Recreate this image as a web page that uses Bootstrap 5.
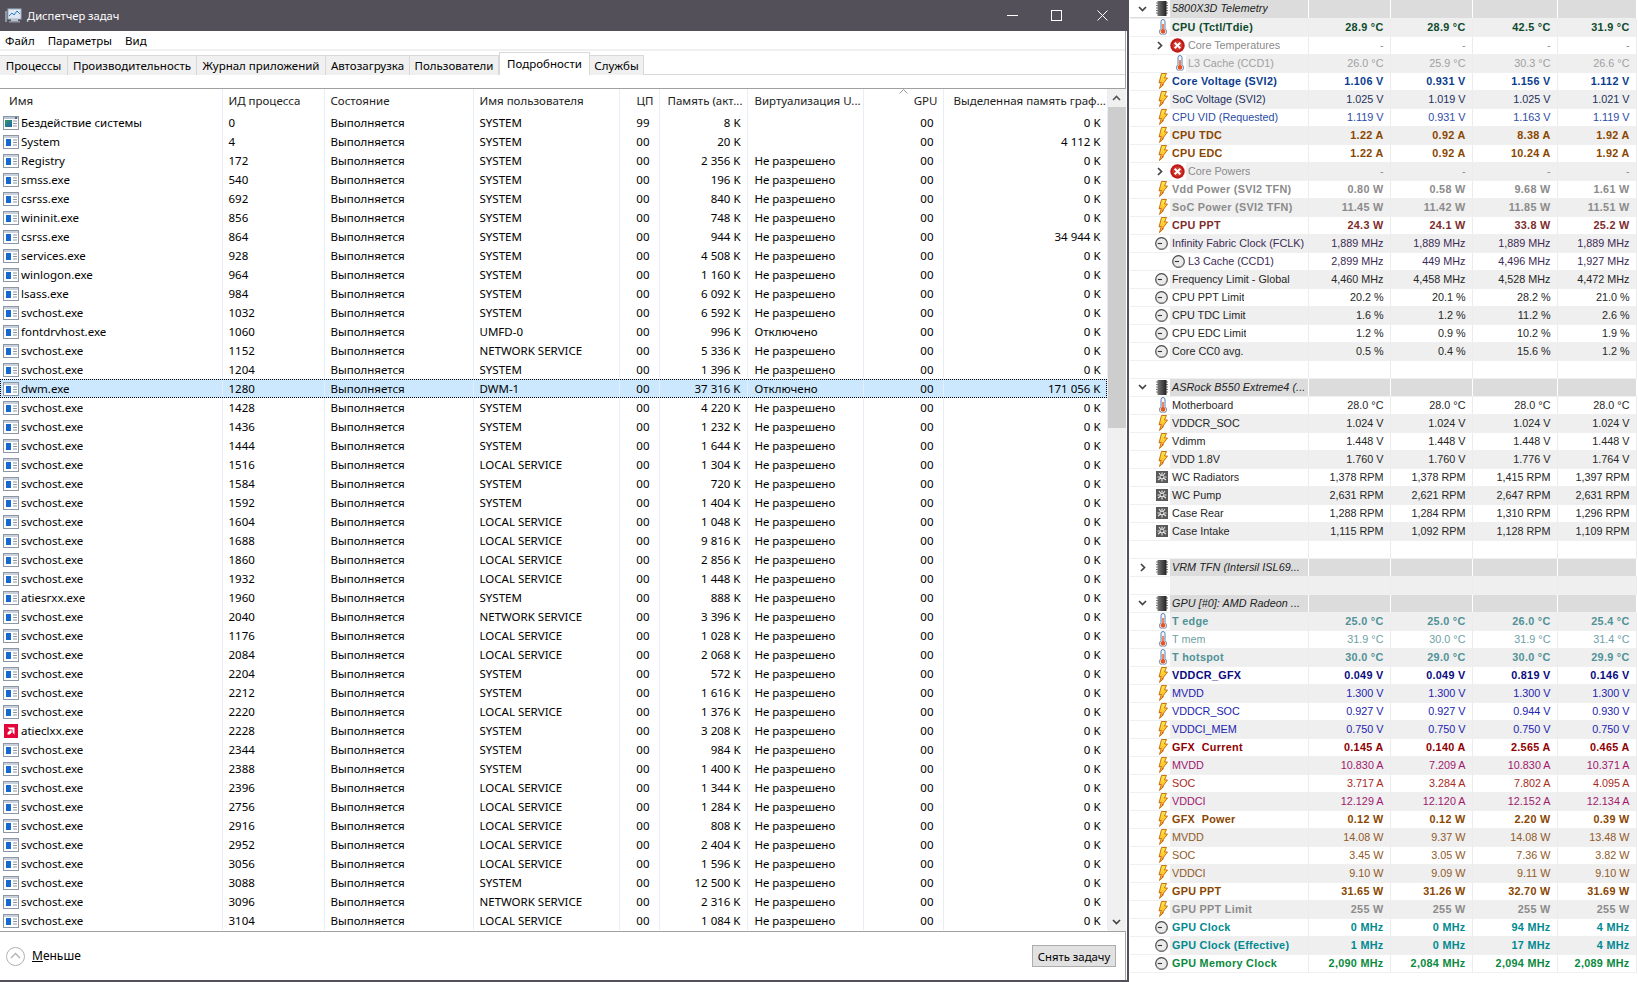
<!DOCTYPE html>
<html lang="ru">
<head>
<meta charset="utf-8">
<title>Диспетчер задач</title>
<link href="https://cdn.jsdelivr.net/npm/bootstrap@5.3.0/dist/css/bootstrap.min.css" rel="stylesheet">
<style>
html,body{height:982px;overflow:hidden;background:#fff}
body{font-family:"Noto Sans","Liberation Sans",sans-serif;font-size:11.5px;color:#000}
.tm-win{width:1129px;height:982px;border-right:2px solid #54505a;border-bottom:2px solid #54505a;flex:none}
.tm-title{height:31px;background:#54505a;color:#fff;padding-left:5px;gap:5px;font-size:11.2px}
.tm-title>span{padding-top:2px}
.tm-ctl{margin-left:auto;gap:33px;padding-right:19px}
.tm-closeico{margin-left:2px}
.tm-main{flex:1;min-height:0;border-right:1px solid #a5a5a5;margin-right:1px}
.tm-menu{height:18px;gap:13px;padding-left:5px;line-height:20px}
.tm-strip{height:2px;background:#f0f0f0}
.tm-tabs.nav-tabs{height:24px;padding-top:4px;border-bottom:1px solid #d9d9d9;--bs-nav-tabs-border-width:0;--bs-nav-link-padding-x:0;--bs-nav-link-padding-y:0;flex-wrap:nowrap}
.tm-tabs .nav-link{height:20px;line-height:19px;font-size:11.5px;color:#000;background:#f0f0f0;border:1px solid #d9d9d9;border-left:0;border-bottom:0;border-radius:0;text-align:center;margin:0}
.tm-tabs .nav-link.active{height:23px;margin-top:-3px;background:#fff;color:#000;border:1px solid #d9d9d9;border-bottom:0;line-height:21px}
.tm-w1{width:68px}.tm-w2{width:129px}.tm-w3{width:129px}.tm-w4{width:84px}.tm-w5{width:89px}.tm-w6{width:91px}.tm-w7{width:54px}
.tm-gridwrap{margin-top:13px;border-top:1px solid #a0a0a0;border-bottom:1px solid #a0a0a0;height:844px;box-sizing:border-box}
.tm-table.table{width:1107px;table-layout:fixed;margin:0;--bs-table-bg:transparent;color:#000;font-size:11.5px;align-self:flex-start}
.tm-table.table>:not(caption)>*>*{padding:0 6px 0 6px;height:19px;line-height:19px;white-space:nowrap;overflow:hidden;border-right:1px solid #e6eef8;box-shadow:none;font-weight:400;vertical-align:middle}
.tm-table.table>:not(caption)>*>*:nth-child(7){padding-left:7px}
.tm-table.table>thead>tr>th{height:24px;line-height:24px;color:#222}
.tm-table.table>thead>tr>th:nth-child(6){padding-left:8px}
.tm-table.table>thead>tr>th.tm-hname{padding-left:9px}
.tm-table.table>thead>tr>th.tm-hvram{padding-left:10px}
.tm-table.table>thead>tr>th.tm-hr{padding-right:5px}
.tm-table .tm-r{text-align:right}
.tm-table tr.tm-sel{background:#cce8ff;outline:1px dotted #000;outline-offset:-1px}
.tm-ico{display:inline-block;vertical-align:-3px;width:16px;height:14px;margin-right:2px}
.tm-table.table>tbody>tr>td.tm-namecell{padding-left:3px}
.tm-table.table>tbody>tr>td.tm-pad{padding-right:9px}
.tm-sorth{position:relative}
.tm-sort{position:absolute;left:35px;top:0;width:9px;height:5px}
.tm-sb{width:18px;background:#f0f0f0;flex:none;align-items:center;padding:0}
.tm-sbarrow{height:18px;width:100%;background:#f0f0f0}
.tm-thumb{width:100%;height:321px;background:#cdcdcd}
.tm-foot{flex:1;padding:0 9px 0 6px}
.tm-less{gap:7px;font-size:12px;color:#000}
.tm-btn.btn{width:84px;height:22px;padding:0;font-size:11.3px;line-height:19px;background:#e1e1e1;border:1px solid #adadad;border-radius:0;color:#000}
.hw-panel{width:507px;padding-left:1px;flex:none}
.hw-table.table{width:506px;table-layout:fixed;margin:0;--bs-table-bg:transparent;font-family:"Liberation Sans",sans-serif;font-size:10.8px;color:#222}
.hw-table.table>:not(caption)>*>*{padding:0;height:18px;line-height:17px;white-space:nowrap;overflow:hidden;border-right:1px solid #ececec;border-bottom:1px solid #f0f0f0;box-shadow:none;color:inherit;font-weight:inherit;vertical-align:middle}
.hw-table.table>tbody>tr>td.hw-val{text-align:right;padding-right:6px}
.hw-table tr.hw-alt{background:#efefef}
.hw-table tr.hw-head{background:#dcdcdc}
.hw-table tr.hw-head>td{border-right-color:#fff!important}
.hw-head .hw-lbl{font-style:italic;color:#222;letter-spacing:.05px}
.hw-cell{display:flex;height:17px;align-items:stretch}
.hw-gut{background:#fff;flex:none;display:flex;justify-content:flex-end;align-items:center;gap:7px;width:40px;padding-right:2px}
.hw-gut2{width:56px;padding-right:1px}
.hw-gutr{padding-left:10px;justify-content:flex-start;gap:0}
.hw-gutd{padding-left:8px;justify-content:flex-start;gap:0}
.hw-lbl{padding-left:2px;overflow:hidden}
.hw-i{flex:none;display:block}
.c-green{color:#0c4a2c}.c-grey{color:#8b8b8b}.c-grey2{color:#a0a0a0}.c-blue{color:#0b3d8f}.c-navy{color:#1c2f5c}.c-vid{color:#2a4ba6}
.c-brown{color:#8a4600}.c-maroon{color:#7d2c2c}.c-purp{color:#3c2a55}.c-dark{color:#262626}.c-tealg{color:#4f9297}.c-tealg2{color:#6f9fa4}
.c-ngfx{color:#0a0a80}.c-nblue{color:#2222b0}.c-red{color:#8f0000}.c-mag{color:#a0186e}.c-rust{color:#a82a1c}
.c-ora{color:#8f5a28}.c-teal{color:#008a8f}.c-gmem{color:#0a8a3c}.hw-b{font-weight:700;letter-spacing:.3px}
.tc1{width:222px}.tc2{width:102px}.tc3{width:149px}.tc4{width:146px}.tc5{width:40px}.tc6{width:88px}.tc7{width:116px}.tc8{width:80px}.tc9{width:164px}
.hc1{width:178px}.hc2{width:82px}.hc3{width:85px}.hc4{width:79px}
</style>
</head>
<body class="d-flex">
<svg width="0" height="0" class="position-absolute">
<defs>
<linearGradient id="boltg" x1="0" y1="0" x2="0" y2="1"><stop offset="0" stop-color="#ffe84a"/><stop offset="1" stop-color="#ffae10"/></linearGradient>
<linearGradient id="chipg" x1="0" y1="0" x2="1" y2="0"><stop offset="0" stop-color="#777"/><stop offset="1" stop-color="#222"/></linearGradient>
<linearGradient id="idleg" x1="0" y1="0" x2="1" y2="1"><stop offset="0" stop-color="#2f9a5a"/><stop offset="1" stop-color="#1d62b8"/></linearGradient>
<symbol id="i-proc" viewBox="0 0 16 14"><rect x=".5" y=".5" width="15" height="13" fill="#fff" stroke="#8c97a3"/><rect x="1" y="1" width="14" height="2" fill="#c7d0dc"/><rect x="3" y="4" width="5" height="7" fill="#1569d0"/><path d="M10 5h4M10 7.5h4M10 10h4" stroke="#8c97a3"/></symbol>
<symbol id="i-idle" viewBox="0 0 16 14"><rect x=".5" y=".5" width="15" height="13" fill="#fff" stroke="#8c97a3"/><rect x="1" y="1" width="14" height="2" fill="#b9c6d6"/><rect x="2" y="4" width="7" height="7" fill="url(#idleg)"/><path d="M10 5h4M10 7.5h4M10 10h4" stroke="#8c97a3"/><rect x="12" y="1" width="2" height="2" fill="#5a6572"/></symbol>
<symbol id="i-amd" viewBox="0 0 16 16"><rect width="16" height="16" fill="#e2063a"/><path d="M4 4h8v8l-2.3-2.3V6.300H6.300zM6.800 7.200 4 10v2h2.600l2.200-2.200V7.200z" fill="#fff"/></symbol>
<symbol id="i-t" viewBox="0 0 10 16"><path d="M3 2.500a2 2 0 0 1 4 0v7.300a3.500 3.500 0 1 1-4 0z" fill="#f4f7fb" stroke="#5a80b4"/><rect x="4.300" y="5" width="1.400" height="6" fill="#e8541e"/><circle cx="5" cy="12.400" r="2.300" fill="#e8541e"/></symbol>
<symbol id="i-b" viewBox="0 0 10 16"><path d="M3.500.5h5L6.500 5h3L4 12.200l1.500-.5L1.500 15.500l1.800-6.200L1 10z" fill="url(#boltg)" stroke="#c2640a" stroke-width=".9" stroke-linejoin="round"/></symbol>
<symbol id="i-c" viewBox="0 0 13 13"><circle cx="6.500" cy="6.500" r="5.800" fill="#ebebeb" stroke="#4a4a4a" stroke-width="1.200"/><path d="M2.800 6.500h4.200" stroke="#333" stroke-width="1.100"/><path d="M1.500 9.500a6 6 0 0 0 10 0" fill="none" stroke="#8e8e8e"/></symbol>
<symbol id="i-f" viewBox="0 0 12 12"><rect width="12" height="12" fill="#595959"/><path d="M6 6 3 2M6 6l3-4M6 6l-4 3M6 6l4 3M6 6V1.500M6 6v4.500M6 6H1.500M6 6h4.500" stroke="#e8e8e8" stroke-width="1.100"/><circle cx="6" cy="6" r="1.300" fill="#595959"/></symbol>
<symbol id="i-chip" viewBox="0 0 12 15"><path d="M0 2h12M0 4.500h12M0 7h12M0 9.500h12M0 12h12" stroke="#777"/><rect x="1.500" width="9" height="15" fill="url(#chipg)"/></symbol>
<symbol id="i-x" viewBox="0 0 15 15"><circle cx="7.500" cy="7.500" r="7.200" fill="#bf1a1a"/><circle cx="7.500" cy="7.500" r="5" fill="#d33a2c"/><path d="M4.700 4.700l5.600 5.600M10.300 4.700l-5.600 5.600" stroke="#fff" stroke-width="2"/></symbol>
<symbol id="i-dn" viewBox="0 0 9 6"><path d="M1 1l3.500 3.500L8 1" fill="none" stroke="#444" stroke-width="1.700"/></symbol>
<symbol id="i-rt" viewBox="0 0 6 9"><path d="M1 1l3.500 3.500L1 8" fill="none" stroke="#444" stroke-width="1.700"/></symbol>
</defs>
</svg>

<div class="tm-win d-flex flex-column">
  <div class="tm-title d-flex align-items-center">
    <svg width="17" height="16" viewBox="0 0 17 16"><rect x="3" y="1" width="13" height="10" fill="#dfe8f2" stroke="#9fb2c6"/><path d="M4 8l3-3 2 2 3-4 3 3" fill="none" stroke="#2a78c8"/><rect x="6" y="11" width="7" height="2" fill="#b8c2cc"/><rect x="4" y="13" width="11" height="1.500" fill="#8e98a2"/><rect x="0" y="3" width="2" height="11" fill="#8e98a2"/></svg>
    <span>Диспетчер задач</span>
    <div class="tm-ctl d-flex align-items-center">
      <svg width="11" height="11" viewBox="0 0 11 11"><path d="M0 5.500h11" stroke="#fff"/></svg>
      <svg width="11" height="11" viewBox="0 0 11 11"><rect x=".5" y=".5" width="10" height="10" fill="none" stroke="#fff"/></svg>
      <svg class="tm-closeico" width="11" height="11" viewBox="0 0 11 11"><path d="M.5.500l10 10M10.500.500l-10 10" stroke="#fff"/></svg>
    </div>
  </div>
  <div class="tm-main d-flex flex-column">
    <div class="tm-menu d-flex"><span>Файл</span><span>Параметры</span><span>Вид</span></div>
    <div class="tm-strip"></div>
    <ul class="nav nav-tabs tm-tabs">
      <li class="nav-item"><a class="nav-link tm-w1">Процессы</a></li>
      <li class="nav-item"><a class="nav-link tm-w2">Производительность</a></li>
      <li class="nav-item"><a class="nav-link tm-w3">Журнал приложений</a></li>
      <li class="nav-item"><a class="nav-link tm-w4">Автозагрузка</a></li>
      <li class="nav-item"><a class="nav-link tm-w5">Пользователи</a></li>
      <li class="nav-item"><a class="nav-link tm-w6 active">Подробности</a></li>
      <li class="nav-item"><a class="nav-link tm-w7">Службы</a></li>
    </ul>
    <div class="tm-gridwrap d-flex">
      <table class="table table-borderless tm-table">
        <colgroup><col class="tc1"><col class="tc2"><col class="tc3"><col class="tc4"><col class="tc5"><col class="tc6"><col class="tc7"><col class="tc8"><col class="tc9"></colgroup>
        <thead><tr>
          <th class="tm-hname">Имя</th><th>ИД процесса</th><th>Состояние</th><th>Имя пользователя</th><th class="tm-r tm-hr">ЦП</th><th>Память (акт...</th><th>Виртуализация U...</th>
          <th class="tm-r tm-sorth tm-hr"><svg class="tm-sort" viewBox="0 0 9 5"><path d="M.5 4.500l4-4 4 4" fill="none" stroke="#9a9a9a"/></svg>GPU</th><th class="tm-hvram">Выделенная память граф...</th>
        </tr></thead>
        <tbody id="tm-body"></tbody>
      </table>
      <div class="tm-sb d-flex flex-column">
        <div class="tm-sbarrow d-flex align-items-center justify-content-center"><svg width="9" height="6" viewBox="0 0 9 6"><path d="M1 5l3.500-3.500L8 5" fill="none" stroke="#555" stroke-width="1.600"/></svg></div>
        <div class="tm-thumb"></div>
        <div class="flex-grow-1"></div>
        <div class="tm-sbarrow d-flex align-items-center justify-content-center"><svg width="9" height="6" viewBox="0 0 9 6"><use href="#i-dn"/></svg></div>
      </div>
    </div>
    <div class="tm-foot d-flex align-items-center justify-content-between">
      <div class="tm-less d-flex align-items-center">
        <svg width="19" height="19" viewBox="0 0 19 19"><circle cx="9.500" cy="9.500" r="9" fill="#fff" stroke="#b0b0b0"/><path d="M5 11l4.500-4.500L14 11" fill="none" stroke="#b0b0b0" stroke-width="1.300"/></svg>
        <span><u>М</u>еньше</span>
      </div>
      <button type="button" class="btn tm-btn">Снять за<u>д</u>ачу</button>
    </div>
  </div>
</div>

<div class="hw-panel">
  <table class="table table-borderless hw-table">
    <colgroup><col class="hc1"><col class="hc2"><col class="hc2"><col class="hc3"><col class="hc4"></colgroup>
    <tbody id="hw-body"></tbody>
  </table>
</div>
<script>
const P='Выполняется',S='SYSTEM',L='LOCAL SERVICE',N='NETWORK SERVICE',NR='Не разрешено',OFF='Отключено';
const procs=[
['Бездействие системы',0,S,'99','8 K','','0 K','i-idle'],['System',4,S,'00','20 K','','4 112 K'],['Registry',172,S,'00','2 356 K',NR,'0 K'],['smss.exe',540,S,'00','196 K',NR,'0 K'],['csrss.exe',692,S,'00','840 K',NR,'0 K'],['wininit.exe',856,S,'00','748 K',NR,'0 K'],['csrss.exe',864,S,'00','944 K',NR,'34 944 K'],['services.exe',928,S,'00','4 508 K',NR,'0 K'],['winlogon.exe',964,S,'00','1 160 K',NR,'0 K'],['lsass.exe',984,S,'00','6 092 K',NR,'0 K'],['svchost.exe',1032,S,'00','6 592 K',NR,'0 K'],['fontdrvhost.exe',1060,'UMFD-0','00','996 K',OFF,'0 K'],['svchost.exe',1152,N,'00','5 336 K',NR,'0 K'],['svchost.exe',1204,S,'00','1 396 K',NR,'0 K'],['dwm.exe',1280,'DWM-1','00','37 316 K',OFF,'171 056 K'],['svchost.exe',1428,S,'00','4 220 K',NR,'0 K'],['svchost.exe',1436,S,'00','1 232 K',NR,'0 K'],['svchost.exe',1444,S,'00','1 644 K',NR,'0 K'],['svchost.exe',1516,L,'00','1 304 K',NR,'0 K'],['svchost.exe',1584,S,'00','720 K',NR,'0 K'],['svchost.exe',1592,S,'00','1 404 K',NR,'0 K'],['svchost.exe',1604,L,'00','1 048 K',NR,'0 K'],['svchost.exe',1688,L,'00','9 816 K',NR,'0 K'],['svchost.exe',1860,L,'00','2 856 K',NR,'0 K'],['svchost.exe',1932,L,'00','1 448 K',NR,'0 K'],['atiesrxx.exe',1960,S,'00','888 K',NR,'0 K'],['svchost.exe',2040,N,'00','3 396 K',NR,'0 K'],['svchost.exe',1176,L,'00','1 028 K',NR,'0 K'],['svchost.exe',2084,L,'00','2 068 K',NR,'0 K'],['svchost.exe',2204,S,'00','572 K',NR,'0 K'],['svchost.exe',2212,S,'00','1 616 K',NR,'0 K'],['svchost.exe',2220,L,'00','1 376 K',NR,'0 K'],['atieclxx.exe',2228,S,'00','3 208 K',NR,'0 K','i-amd'],['svchost.exe',2344,S,'00','984 K',NR,'0 K'],['svchost.exe',2388,S,'00','1 400 K',NR,'0 K'],['svchost.exe',2396,L,'00','1 344 K',NR,'0 K'],['svchost.exe',2756,L,'00','1 284 K',NR,'0 K'],['svchost.exe',2916,L,'00','808 K',NR,'0 K'],['svchost.exe',2952,L,'00','2 404 K',NR,'0 K'],['svchost.exe',3056,L,'00','1 596 K',NR,'0 K'],['svchost.exe',3088,S,'00','12 500 K',NR,'0 K'],['svchost.exe',3096,N,'00','2 316 K',NR,'0 K'],['svchost.exe',3104,L,'00','1 084 K',NR,'0 K']];
document.getElementById('tm-body').innerHTML=procs.map(p=>`<tr${p[0]==='dwm.exe'?' class="tm-sel"':''}><td class="tm-namecell"><svg class="tm-ico"><use href="#${p[7]||'i-proc'}"/></svg>${p[0]}</td><td>${p[1]}</td><td>${P}</td><td>${p[2]}</td><td class="tm-r tm-pad">${p[3]}</td><td class="tm-r">${p[4]}</td><td>${p[5]}</td><td class="tm-r tm-pad">00</td><td class="tm-r">${p[6]}</td></tr>`).join('');

const H=[
'h|5800X3D Telemetry',
't|CPU (Tctl/Tdie)|28.9 °C|28.9 °C|42.5 °C|31.9 °C|c-green hw-b',
'x|Core Temperatures|-|-|-|-|c-grey',
't2|L3 Cache (CCD1)|26.0 °C|25.9 °C|30.3 °C|26.6 °C|c-grey2',
'b|Core Voltage (SVI2)|1.106 V|0.931 V|1.156 V|1.112 V|c-blue hw-b',
'b|SoC Voltage (SVI2)|1.025 V|1.019 V|1.025 V|1.021 V|c-navy',
'b|CPU VID (Requested)|1.119 V|0.931 V|1.163 V|1.119 V|c-vid',
'b|CPU TDC|1.22 A|0.92 A|8.38 A|1.92 A|c-brown hw-b',
'b|CPU EDC|1.22 A|0.92 A|10.24 A|1.92 A|c-brown hw-b',
'x|Core Powers|-|-|-|-|c-grey',
'b|Vdd Power (SVI2 TFN)|0.80 W|0.58 W|9.68 W|1.61 W|c-grey hw-b',
'b|SoC Power (SVI2 TFN)|11.45 W|11.42 W|11.85 W|11.51 W|c-grey hw-b',
'b|CPU PPT|24.3 W|24.1 W|33.8 W|25.2 W|c-maroon hw-b',
'c|Infinity Fabric Clock (FCLK)|1,889 MHz|1,889 MHz|1,889 MHz|1,889 MHz|c-purp',
'c2|L3 Cache (CCD1)|2,899 MHz|449 MHz|4,496 MHz|1,927 MHz|c-purp',
'c|Frequency Limit - Global|4,460 MHz|4,458 MHz|4,528 MHz|4,472 MHz|c-dark',
'c|CPU PPT Limit|20.2 %|20.1 %|28.2 %|21.0 %|c-dark',
'c|CPU TDC Limit|1.6 %|1.2 %|11.2 %|2.6 %|c-dark',
'c|CPU EDC Limit|1.2 %|0.9 %|10.2 %|1.9 %|c-dark',
'c|Core CC0 avg.|0.5 %|0.4 %|15.6 %|1.2 %|c-dark',
'',
'h|ASRock B550 Extreme4 (...',
't|Motherboard|28.0 °C|28.0 °C|28.0 °C|28.0 °C|c-dark',
'b|VDDCR_SOC|1.024 V|1.024 V|1.024 V|1.024 V|c-dark',
'b|Vdimm|1.448 V|1.448 V|1.448 V|1.448 V|c-dark',
'b|VDD 1.8V|1.760 V|1.760 V|1.776 V|1.764 V|c-dark',
'f|WC Radiators|1,378 RPM|1,378 RPM|1,415 RPM|1,397 RPM|c-dark',
'f|WC Pump|2,631 RPM|2,621 RPM|2,647 RPM|2,631 RPM|c-dark',
'f|Case Rear|1,288 RPM|1,284 RPM|1,310 RPM|1,296 RPM|c-dark',
'f|Case Intake|1,115 RPM|1,092 RPM|1,128 RPM|1,109 RPM|c-dark',
'',
'r|VRM TFN (Intersil ISL69...',
'',
'h|GPU [#0]: AMD Radeon ...',
't|T edge|25.0 °C|25.0 °C|26.0 °C|25.4 °C|c-tealg hw-b',
't|T mem|31.9 °C|30.0 °C|31.9 °C|31.4 °C|c-tealg2',
't|T hotspot|30.0 °C|29.0 °C|30.0 °C|29.9 °C|c-tealg hw-b',
'b|VDDCR_GFX|0.049 V|0.049 V|0.819 V|0.146 V|c-ngfx hw-b',
'b|MVDD|1.300 V|1.300 V|1.300 V|1.300 V|c-nblue',
'b|VDDCR_SOC|0.927 V|0.927 V|0.944 V|0.930 V|c-nblue',
'b|VDDCI_MEM|0.750 V|0.750 V|0.750 V|0.750 V|c-nblue',
'b|GFX  Current|0.145 A|0.140 A|2.565 A|0.465 A|c-red hw-b',
'b|MVDD|10.830 A|7.209 A|10.830 A|10.371 A|c-mag',
'b|SOC|3.717 A|3.284 A|7.802 A|4.095 A|c-rust',
'b|VDDCI|12.129 A|12.120 A|12.152 A|12.134 A|c-mag',
'b|GFX  Power|0.12 W|0.12 W|2.20 W|0.39 W|c-brown hw-b',
'b|MVDD|14.08 W|9.37 W|14.08 W|13.48 W|c-ora',
'b|SOC|3.45 W|3.05 W|7.36 W|3.82 W|c-ora',
'b|VDDCI|9.10 W|9.09 W|9.11 W|9.10 W|c-ora',
'b|GPU PPT|31.65 W|31.26 W|32.70 W|31.69 W|c-brown hw-b',
'b|GPU PPT Limit|255 W|255 W|255 W|255 W|c-grey hw-b',
'c|GPU Clock|0 MHz|0 MHz|94 MHz|4 MHz|c-teal hw-b',
'c|GPU Clock (Effective)|1 MHz|0 MHz|17 MHz|4 MHz|c-teal hw-b',
'c|GPU Memory Clock|2,090 MHz|2,084 MHz|2,094 MHz|2,089 MHz|c-gmem hw-b'];
const ic=(id,w,h)=>`<svg class="hw-i" width="${w}" height="${h}"><use href="#${id}"/></svg>`;
const spec={t:['i-t',10,16],b:['i-b',10,16],c:['i-c',13,13],f:['i-f',12,12]};
document.getElementById('hw-body').innerHTML=H.map((r,i)=>{
  const a=r.split('|'),k=a[0];
  const vals=a.slice(2,6);
  const alt=(i<=30?i%2==1:i%2==0);
  if(k==='h'||k==='r'){
    return `<tr class="hw-head"><td><div class="hw-cell"><div class="hw-gut ${k==='h'?'hw-gutd':'hw-gutr'}">${k==='h'?ic('i-dn',9,6):ic('i-rt',6,9)}<span class="flex-grow-1"></span>${ic('i-chip',12,15)}</div><div class="hw-lbl">${a[1]}</div></div></td><td></td><td></td><td></td><td></td></tr>`;
  }
  let g,lv='';
  if(k==='x'){g=`${ic('i-rt',6,9)}${ic('i-x',15,15)}`;lv=' hw-gut2';}
  else if(k==='t2'||k==='c2'){g=k==='c2'?ic('i-c',13,13):ic('i-t',10,16);lv=' hw-gut2';}
  else if(k){const s=spec[k];g=ic(s[0],s[1],s[2]);}
  else g='';
  const cls=[alt?'hw-alt':'',a[6]||''].join(' ');
  return `<tr class="${cls}"><td><div class="hw-cell"><div class="hw-gut${lv}">${g}</div><div class="hw-lbl">${(a[1]||'').replace(/  /g,'&nbsp; ')}</div></div></td>${[0,1,2,3].map(j=>`<td class="hw-val">${vals[j]||''}</td>`).join('')}</tr>`;
}).join('');
</script>
<script src="https://cdn.jsdelivr.net/npm/bootstrap@5.3.0/dist/js/bootstrap.bundle.min.js"></script>
</body>
</html>
